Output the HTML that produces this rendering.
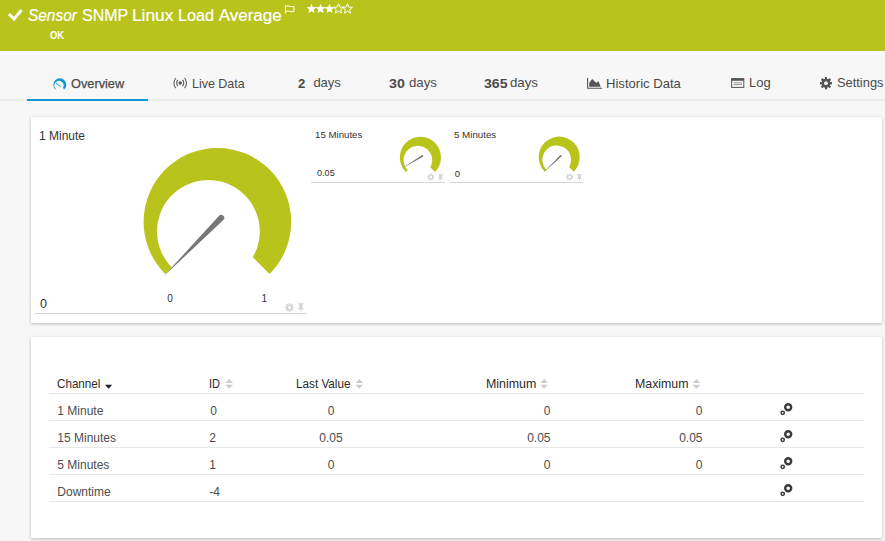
<!DOCTYPE html>
<html><head><meta charset="utf-8">
<style>
*{margin:0;padding:0;box-sizing:border-box}
html,body{width:885px;height:541px;overflow:hidden;background:#f7f7f7;font-family:"Liberation Sans",sans-serif;position:relative}
.a{position:absolute;white-space:nowrap}
.panel{position:absolute;background:#fff;box-shadow:0 1px 3px rgba(0,0,0,.25)}
svg{position:absolute;left:0;top:0}
</style></head><body>
<div class="a" style="left:0;top:0;width:885px;height:51px;background:#b8c41c"></div>
<div class="a" style="left:0;top:99px;width:885px;height:2px;background:#ececec"></div>
<div class="a" style="left:27px;top:99px;width:121px;height:2px;background:#0f97d4"></div>
<div class="panel" style="left:31px;top:117px;width:851px;height:206px"></div>
<div class="panel" style="left:31px;top:337px;width:851px;height:201px"></div>
<div class="a" style="left:35px;top:313px;width:271px;height:1px;background:#d6d6d6"></div>
<div class="a" style="left:311px;top:182px;width:134px;height:1px;background:#d6d6d6"></div>
<div class="a" style="left:450px;top:182px;width:133px;height:1px;background:#d6d6d6"></div>
<div class="a" style="left:49px;top:393px;width:815px;height:1px;background:#e8e8e8"></div>
<div class="a" style="left:49px;top:420px;width:815px;height:1px;background:#e8e8e8"></div>
<div class="a" style="left:49px;top:447px;width:815px;height:1px;background:#e8e8e8"></div>
<div class="a" style="left:49px;top:474px;width:815px;height:1px;background:#e8e8e8"></div>
<div class="a" style="left:49px;top:501px;width:815px;height:1px;background:#e8e8e8"></div>
<div class="a" style="left:28.19px;top:7.00px;line-height:1;color:#fff;font-size:17px;-webkit-text-stroke:0.2px #fff;transform:scaleX(0.9075);transform-origin:0 0;"><i>Sensor</i></div><div class="a" style="left:81.66px;top:7.00px;line-height:1;color:#fff;font-size:17px;-webkit-text-stroke:0.2px #fff;transform:scaleX(0.9383);transform-origin:0 0;">SNMP</div><div class="a" style="left:131.78px;top:7.00px;line-height:1;color:#fff;font-size:17px;-webkit-text-stroke:0.2px #fff;transform:scaleX(1.0179);transform-origin:0 0;">Linux</div><div class="a" style="left:177.95px;top:7.00px;line-height:1;color:#fff;font-size:17px;-webkit-text-stroke:0.2px #fff;transform:scaleX(0.9528);transform-origin:0 0;">Load</div><div class="a" style="left:218.70px;top:7.00px;line-height:1;color:#fff;font-size:17px;-webkit-text-stroke:0.2px #fff;">Average</div><div class="a" style="left:49.70px;top:30.00px;line-height:1;color:#fff;font-size:11px;font-weight:bold;transform:scaleX(0.8500);transform-origin:0 0;">OK</div><div class="a" style="left:71.02px;top:76.70px;line-height:1;color:#4a4a4a;font-size:13px;-webkit-text-stroke:0.25px #4a4a4a;transform:scaleX(0.9811);transform-origin:0 0;">Overview</div><div class="a" style="left:191.54px;top:76.70px;line-height:1;color:#4a4a4a;font-size:13px;transform:scaleX(0.9593);transform-origin:0 0;">Live Data</div><div class="a" style="left:297.80px;top:76.85px;line-height:1;color:#4a4a4a;font-size:13px;transform:scaleX(1.0143);transform-origin:0 0;"><b>2</b></div><div class="a" style="left:313.40px;top:76.10px;line-height:1;color:#4a4a4a;font-size:13px;">days</div><div class="a" style="left:389.41px;top:76.85px;line-height:1;color:#4a4a4a;font-size:13px;transform:scaleX(1.0923);transform-origin:0 0;"><b>30</b></div><div class="a" style="left:409.18px;top:76.10px;line-height:1;color:#4a4a4a;font-size:13px;transform:scaleX(1.0154);transform-origin:0 0;">days</div><div class="a" style="left:483.81px;top:76.85px;line-height:1;color:#4a4a4a;font-size:13px;transform:scaleX(1.0850);transform-origin:0 0;"><b>365</b></div><div class="a" style="left:509.58px;top:76.10px;line-height:1;color:#4a4a4a;font-size:13px;transform:scaleX(1.0192);transform-origin:0 0;">days</div><div class="a" style="left:606.29px;top:76.85px;line-height:1;color:#4a4a4a;font-size:13px;transform:scaleX(1.0055);transform-origin:0 0;">Historic Data</div><div class="a" style="left:749.10px;top:76.10px;line-height:1;color:#4a4a4a;font-size:13px;">Log</div><div class="a" style="left:836.51px;top:76.10px;line-height:1;color:#4a4a4a;font-size:13px;transform:scaleX(0.9891);transform-origin:0 0;">Settings</div><div class="a" style="left:39.00px;top:130.10px;line-height:1;color:#333;font-size:12px;">1 Minute</div><div class="a" style="left:315.48px;top:129.65px;line-height:1;color:#333;font-size:9.5px;transform:scaleX(1.0178);transform-origin:0 0;">15 Minutes</div><div class="a" style="left:316.50px;top:168.20px;line-height:1;color:#333;font-size:9.5px;transform:scaleX(0.9611);transform-origin:0 0;">0.05</div><div class="a" style="left:453.78px;top:129.85px;line-height:1;color:#333;font-size:9.5px;transform:scaleX(1.0250);transform-origin:0 0;">5 Minutes</div><div class="a" style="left:454.80px;top:168.65px;line-height:1;color:#333;font-size:9.5px;">0</div><div class="a" style="left:39.90px;top:298.00px;line-height:1;color:#333;font-size:12.5px;">0</div><div class="a" style="left:167.30px;top:294.00px;line-height:1;color:#333;font-size:10px;">0</div><div class="a" style="left:261.60px;top:294.00px;line-height:1;color:#333;font-size:10px;">1</div><div class="a" style="left:57.23px;top:378.15px;line-height:1;color:#2b2b2b;font-size:12px;transform:scaleX(0.9698);transform-origin:0 0;">Channel</div><div class="a" style="left:209.28px;top:378.15px;line-height:1;color:#2b2b2b;font-size:12px;transform:scaleX(0.9182);transform-origin:0 0;">ID</div><div class="a" style="left:296.22px;top:378.15px;line-height:1;color:#2b2b2b;font-size:12px;transform:scaleX(0.9764);transform-origin:0 0;">Last Value</div><div class="a" style="left:485.87px;top:378.15px;line-height:1;color:#2b2b2b;font-size:12px;transform:scaleX(1.0340);transform-origin:0 0;">Minimum</div><div class="a" style="left:635.07px;top:378.15px;line-height:1;color:#2b2b2b;font-size:12px;transform:scaleX(1.0280);transform-origin:0 0;">Maximum</div><div class="a" style="left:57.30px;top:405.00px;line-height:1;color:#4d4d4d;font-size:12px;">1 Minute</div><div class="a" style="left:210.20px;top:405.00px;line-height:1;color:#4d4d4d;font-size:12px;">0</div><div class="a" style="left:57.30px;top:432.00px;line-height:1;color:#4d4d4d;font-size:12px;">15 Minutes</div><div class="a" style="left:209.20px;top:432.00px;line-height:1;color:#4d4d4d;font-size:12px;">2</div><div class="a" style="left:57.30px;top:459.00px;line-height:1;color:#4d4d4d;font-size:12px;">5 Minutes</div><div class="a" style="left:209.20px;top:459.00px;line-height:1;color:#4d4d4d;font-size:12px;">1</div><div class="a" style="left:57.30px;top:486.00px;line-height:1;color:#4d4d4d;font-size:12px;">Downtime</div><div class="a" style="left:209.20px;top:486.00px;line-height:1;color:#4d4d4d;font-size:12px;">-4</div><div class="a" style="left:281.00px;width:100px;text-align:center;top:405.40px;font-size:12px;line-height:1;color:#4d4d4d">0</div>
<div class="a" style="left:450.50px;width:100px;text-align:right;top:405.40px;font-size:12px;line-height:1;color:#4d4d4d">0</div>
<div class="a" style="left:602.50px;width:100px;text-align:right;top:405.40px;font-size:12px;line-height:1;color:#4d4d4d">0</div>
<div class="a" style="left:281.00px;width:100px;text-align:center;top:432.40px;font-size:12px;line-height:1;color:#4d4d4d">0.05</div>
<div class="a" style="left:450.50px;width:100px;text-align:right;top:432.40px;font-size:12px;line-height:1;color:#4d4d4d">0.05</div>
<div class="a" style="left:602.50px;width:100px;text-align:right;top:432.40px;font-size:12px;line-height:1;color:#4d4d4d">0.05</div>
<div class="a" style="left:281.00px;width:100px;text-align:center;top:459.40px;font-size:12px;line-height:1;color:#4d4d4d">0</div>
<div class="a" style="left:450.50px;width:100px;text-align:right;top:459.40px;font-size:12px;line-height:1;color:#4d4d4d">0</div>
<div class="a" style="left:602.50px;width:100px;text-align:right;top:459.40px;font-size:12px;line-height:1;color:#4d4d4d">0</div>
<svg width="885" height="541" viewBox="0 0 885 541">
<polyline points="9,14 14.1,19.1 21.5,10" fill="none" stroke="#fff" stroke-width="3"/>
<path d="M285.5 5 V13.6" stroke="#fff" stroke-width="1.1" fill="none"/>
<path d="M286 6.2 Q288 5.4 290 6.4 Q292 7.2 294 6.2 V11.4 Q292 12.3 290 11.4 Q288 10.6 286 11.4" stroke="#fff" stroke-width="1" fill="none"/>
<polygon points="311.50,3.70 312.84,7.05 316.45,7.29 313.68,9.61 314.56,13.11 311.50,11.19 308.44,13.11 309.32,9.61 306.55,7.29 310.16,7.05" fill="#fff"/>
<polygon points="320.50,3.70 321.84,7.05 325.45,7.29 322.68,9.61 323.56,13.11 320.50,11.19 317.44,13.11 318.32,9.61 315.55,7.29 319.16,7.05" fill="#fff"/>
<polygon points="329.50,3.70 330.84,7.05 334.45,7.29 331.68,9.61 332.56,13.11 329.50,11.19 326.44,13.11 327.32,9.61 324.55,7.29 328.16,7.05" fill="#fff"/>
<polygon points="338.50,3.70 339.84,7.05 343.45,7.29 340.68,9.61 341.56,13.11 338.50,11.19 335.44,13.11 336.32,9.61 333.55,7.29 337.16,7.05" fill="none" stroke="#fff" stroke-width="1"/>
<polygon points="347.50,3.70 348.84,7.05 352.45,7.29 349.68,9.61 350.56,13.11 347.50,11.19 344.44,13.11 345.32,9.61 342.55,7.29 346.16,7.05" fill="none" stroke="#fff" stroke-width="1"/>
<path fill="#b8c41c" d="M165.22 273.98 A73.80 73.80 0 1 1 269.58 273.98 L252.84 257.24 A51.40 51.40 0 1 0 171.76 267.44 Z"/>
<path fill="#777" d="M219.06 215.79 L163.40 276.50 L223.34 220.01 A3.00 3.00 0 0 0 219.06 215.79 Z"/>
<path fill="#b8c41c" d="M405.83 171.97 A20.60 20.60 0 1 1 434.97 171.97 L430.27 167.27 A14.30 14.30 0 1 0 407.69 170.11 Z"/>
<path fill="#777" d="M421.94 155.23 L400.80 169.00 L422.86 156.77 A0.90 0.90 0 0 0 421.94 155.23 Z"/>
<path fill="#b8c41c" d="M544.70 171.60 A20.50 20.50 0 1 1 573.70 171.60 L569.07 166.97 A14.30 14.30 0 1 0 546.49 169.81 Z"/>
<path fill="#777" d="M560.18 155.25 L542.50 173.40 L561.42 156.55 A0.90 0.90 0 0 0 560.18 155.25 Z"/>
<path fill="#0f97d4" d="M55.20 89.40 A6.50 6.50 0 1 1 64.40 89.40 L62.95 87.95 A4.60 4.60 0 1 0 55.75 88.85 Z"/>
<path d="M56 83 L60.7 86.7" stroke="#0f97d4" stroke-width="0.9"/>
<circle cx="180.2" cy="83.1" r="1.75" fill="#555"/>
<path d="M178.0 80.0 A4.2 4.2 0 0 0 178.0 86.2 M182.4 80.0 A4.2 4.2 0 0 1 182.4 86.2" stroke="#555" stroke-width="1.05" fill="none"/>
<path d="M175.9 78.0 A7.5 7.5 0 0 0 175.9 88.2 M184.5 78.0 A7.5 7.5 0 0 1 184.5 88.2" stroke="#555" stroke-width="1.05" fill="none"/>
<path d="M587.6 78 V88.3 H602" stroke="#555" stroke-width="1.1" fill="none"/>
<path d="M589.2 86.8 V83 L592.2 79 L596.3 83 L598.3 81 L600.7 86.8 Z" fill="#555"/>
<rect x="731.6" y="78.6" width="12.2" height="8.8" fill="none" stroke="#555" stroke-width="1"/>
<rect x="731.6" y="78.6" width="12.2" height="2.2" fill="#555"/>
<path d="M733.5 82.8 H742 M733.5 84.6 H742" stroke="#999" stroke-width="1"/>
<rect x="825.04" y="77.20" width="1.92" height="12.00" fill="#555" transform="rotate(0.0 826.00 83.20)"/><rect x="825.04" y="77.20" width="1.92" height="12.00" fill="#555" transform="rotate(45.0 826.00 83.20)"/><rect x="825.04" y="77.20" width="1.92" height="12.00" fill="#555" transform="rotate(90.0 826.00 83.20)"/><rect x="825.04" y="77.20" width="1.92" height="12.00" fill="#555" transform="rotate(135.0 826.00 83.20)"/><rect x="825.04" y="77.20" width="1.92" height="12.00" fill="#555" transform="rotate(180.0 826.00 83.20)"/><rect x="825.04" y="77.20" width="1.92" height="12.00" fill="#555" transform="rotate(225.0 826.00 83.20)"/><rect x="825.04" y="77.20" width="1.92" height="12.00" fill="#555" transform="rotate(270.0 826.00 83.20)"/><rect x="825.04" y="77.20" width="1.92" height="12.00" fill="#555" transform="rotate(315.0 826.00 83.20)"/><circle cx="826.00" cy="83.20" r="4.50" fill="#555"/><circle cx="826.00" cy="83.20" r="1.90" fill="#f7f7f7"/>
<rect x="288.81" y="303.30" width="1.38" height="8.60" fill="#d6d6d6" transform="rotate(0.0 289.50 307.60)"/><rect x="288.81" y="303.30" width="1.38" height="8.60" fill="#d6d6d6" transform="rotate(45.0 289.50 307.60)"/><rect x="288.81" y="303.30" width="1.38" height="8.60" fill="#d6d6d6" transform="rotate(90.0 289.50 307.60)"/><rect x="288.81" y="303.30" width="1.38" height="8.60" fill="#d6d6d6" transform="rotate(135.0 289.50 307.60)"/><rect x="288.81" y="303.30" width="1.38" height="8.60" fill="#d6d6d6" transform="rotate(180.0 289.50 307.60)"/><rect x="288.81" y="303.30" width="1.38" height="8.60" fill="#d6d6d6" transform="rotate(225.0 289.50 307.60)"/><rect x="288.81" y="303.30" width="1.38" height="8.60" fill="#d6d6d6" transform="rotate(270.0 289.50 307.60)"/><rect x="288.81" y="303.30" width="1.38" height="8.60" fill="#d6d6d6" transform="rotate(315.0 289.50 307.60)"/><circle cx="289.50" cy="307.60" r="3.22" fill="#d6d6d6"/><circle cx="289.50" cy="307.60" r="1.50" fill="#fff"/>
<path d="M297.90 303.20 L303.80 303.20 L303.80 304.20 L302.60 304.20 L302.60 307.60 L303.90 309.40 L297.80 309.40 L299.10 307.60 L299.10 304.20 L297.90 304.20 Z M300.45 309.40 L301.25 309.40 L301.10 312.40 L300.60 312.40 Z" fill="#d6d6d6"/>
<rect x="430.26" y="173.60" width="1.09" height="6.80" fill="#d6d6d6" transform="rotate(0.0 430.80 177.00)"/><rect x="430.26" y="173.60" width="1.09" height="6.80" fill="#d6d6d6" transform="rotate(45.0 430.80 177.00)"/><rect x="430.26" y="173.60" width="1.09" height="6.80" fill="#d6d6d6" transform="rotate(90.0 430.80 177.00)"/><rect x="430.26" y="173.60" width="1.09" height="6.80" fill="#d6d6d6" transform="rotate(135.0 430.80 177.00)"/><rect x="430.26" y="173.60" width="1.09" height="6.80" fill="#d6d6d6" transform="rotate(180.0 430.80 177.00)"/><rect x="430.26" y="173.60" width="1.09" height="6.80" fill="#d6d6d6" transform="rotate(225.0 430.80 177.00)"/><rect x="430.26" y="173.60" width="1.09" height="6.80" fill="#d6d6d6" transform="rotate(270.0 430.80 177.00)"/><rect x="430.26" y="173.60" width="1.09" height="6.80" fill="#d6d6d6" transform="rotate(315.0 430.80 177.00)"/><circle cx="430.80" cy="177.00" r="2.55" fill="#d6d6d6"/><circle cx="430.80" cy="177.00" r="1.20" fill="#fff"/>
<path d="M438.00 173.90 L443.00 173.90 L443.00 174.75 L441.98 174.75 L441.98 177.63 L443.08 179.15 L437.92 179.15 L439.02 177.63 L439.02 174.75 L438.00 174.75 Z M440.16 179.15 L440.84 179.15 L440.71 181.70 L440.29 181.70 Z" fill="#d6d6d6"/>
<rect x="569.06" y="173.60" width="1.09" height="6.80" fill="#d6d6d6" transform="rotate(0.0 569.60 177.00)"/><rect x="569.06" y="173.60" width="1.09" height="6.80" fill="#d6d6d6" transform="rotate(45.0 569.60 177.00)"/><rect x="569.06" y="173.60" width="1.09" height="6.80" fill="#d6d6d6" transform="rotate(90.0 569.60 177.00)"/><rect x="569.06" y="173.60" width="1.09" height="6.80" fill="#d6d6d6" transform="rotate(135.0 569.60 177.00)"/><rect x="569.06" y="173.60" width="1.09" height="6.80" fill="#d6d6d6" transform="rotate(180.0 569.60 177.00)"/><rect x="569.06" y="173.60" width="1.09" height="6.80" fill="#d6d6d6" transform="rotate(225.0 569.60 177.00)"/><rect x="569.06" y="173.60" width="1.09" height="6.80" fill="#d6d6d6" transform="rotate(270.0 569.60 177.00)"/><rect x="569.06" y="173.60" width="1.09" height="6.80" fill="#d6d6d6" transform="rotate(315.0 569.60 177.00)"/><circle cx="569.60" cy="177.00" r="2.55" fill="#d6d6d6"/><circle cx="569.60" cy="177.00" r="1.20" fill="#fff"/>
<path d="M576.90 173.90 L581.90 173.90 L581.90 174.75 L580.88 174.75 L580.88 177.63 L581.98 179.15 L576.82 179.15 L577.92 177.63 L577.92 174.75 L576.90 174.75 Z M579.06 179.15 L579.74 179.15 L579.61 181.70 L579.19 181.70 Z" fill="#d6d6d6"/>
<path d="M225.40 383 L229.20 379 L233.00 383 Z M225.40 384.7 L229.20 388.8 L233.00 384.7 Z" fill="#cccccc"/>
<path d="M355.55 383 L359.35 379 L363.15 383 Z M355.55 384.7 L359.35 388.8 L363.15 384.7 Z" fill="#cccccc"/>
<path d="M540.35 383 L544.15 379 L547.95 383 Z M540.35 384.7 L544.15 388.8 L547.95 384.7 Z" fill="#cccccc"/>
<path d="M692.60 383 L696.40 379 L700.20 383 Z M692.60 384.7 L696.40 388.8 L700.20 384.7 Z" fill="#cccccc"/>
<path d="M105 384.7 H112.2 L108.6 388.8 Z" fill="#1e1e2a"/>
<circle cx="788.2" cy="407.2" r="3.0" fill="none" stroke="#3a3a3a" stroke-width="2.4"/>
<circle cx="782.7" cy="412.8" r="1.65" fill="none" stroke="#3a3a3a" stroke-width="1.5"/>
<circle cx="788.2" cy="434.2" r="3.0" fill="none" stroke="#3a3a3a" stroke-width="2.4"/>
<circle cx="782.7" cy="439.8" r="1.65" fill="none" stroke="#3a3a3a" stroke-width="1.5"/>
<circle cx="788.2" cy="461.2" r="3.0" fill="none" stroke="#3a3a3a" stroke-width="2.4"/>
<circle cx="782.7" cy="466.8" r="1.65" fill="none" stroke="#3a3a3a" stroke-width="1.5"/>
<circle cx="788.2" cy="488.2" r="3.0" fill="none" stroke="#3a3a3a" stroke-width="2.4"/>
<circle cx="782.7" cy="493.8" r="1.65" fill="none" stroke="#3a3a3a" stroke-width="1.5"/>
</svg>
</body></html>
